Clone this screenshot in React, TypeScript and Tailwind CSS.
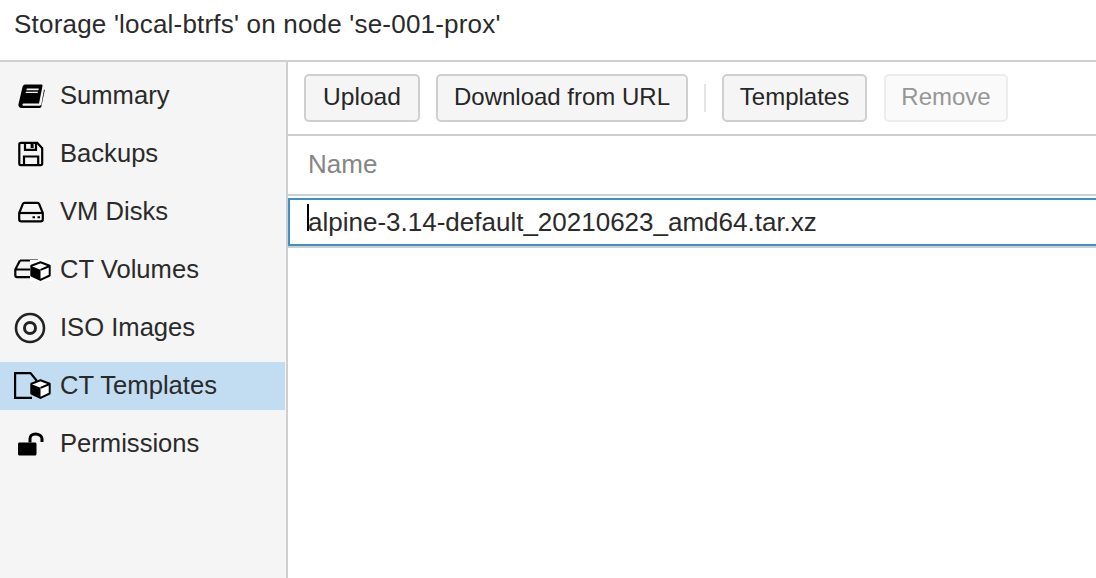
const font = { fontFamily: '"Liberation Sans", Arial, sans-serif' };

const BookIcon = () => (
  <svg width="28" height="26" viewBox="0 0 28 26">
    <path d="M8 1.500h16.500c.8 0 1.200.6 1 1.400L22 20.500H6.500c-1.300 0-1.500 2.300-.2 2.300h16.600c.8 0 1.200-.4 1.500-1.200L27 6.500l.8.6-3.400 16.200c-.2 1-.9 1.700-2 1.700H4.500C2.300 25 .9 23.200 1.500 21L5.500 4c.4-1.500 1.300-2.500 2.500-2.500z" fill="#000" />
    <path d="M9.800 5.500h12l-.4 1.700h-12zM9 8.800h12l-.4 1.200h-12z" fill="#f5f5f5" />
  </svg>
);

const SaveIcon = () => (
  <svg width="26" height="26" viewBox="0 0 26 26" fill="none" stroke="#000" strokeWidth="2.200">
    <path d="M2.800 1.800h16.400l5 5.500v15.200c0 .9-.7 1.600-1.600 1.600H2.800c-.9 0-1.500-.7-1.500-1.600V3.300c0-.9.600-1.500 1.500-1.500z" />
    <path d="M7 2v6.800h11V2" />
    <path d="M6 24v-8.500h14.200V24" />
    <rect x="12.600" y="2.500" width="3" height="4.500" fill="#000" stroke="none" />
  </svg>
);

const DiskIcon = () => (
  <svg width="26" height="22" viewBox="0 0 26 22" fill="none" stroke="#000" strokeWidth="2.200">
    <path d="M6.500 1.800h13c.8 0 1.300.4 1.600 1.100l3.700 9.100v6.200c0 1.300-.8 2.100-2.100 2.100H3.300c-1.300 0-2.100-.8-2.100-2.100V12l3.700-9.100c.3-.7.800-1.100 1.600-1.100z" />
    <path d="M1.500 12h23" />
    <path d="M14.500 16.200h2.500M19.500 16.200h2.500" strokeWidth="2" />
  </svg>
);

const Cube = () => (
  <svg width="21" height="20" viewBox="0 0 21 20" className="block">
    <path d="M10.500 1.200 19.700 4.700v9.800l-9.200 4.400-9.200-4.400V4.700z" fill="#fff" stroke="#000" strokeWidth="2" strokeLinejoin="round" />
    <path d="M1 5 10.500 8.800V19.400L1 14.800z" fill="#000" />
    <path d="M10.500 8.800 19.700 5" stroke="#000" strokeWidth="2" />
  </svg>
);

const VolumeIcon = () => (
  <div className="relative h-[22px] w-[36px]">
    <svg width="26" height="20" viewBox="0 0 26 20" fill="none" stroke="#000" strokeWidth="2.200" className="absolute left-0 top-0">
      <path d="M6 1.500h18M6 1.500 1.300 10.500v5.800c0 1.200.7 1.900 1.800 1.900H17M1.500 10.500H18" />
    </svg>
    <div className="absolute left-[16px] top-[1px] h-[21px] bg-white pt-px">
      <Cube />
    </div>
  </div>
);

const IsoIcon = () => (
  <svg width="32" height="32" viewBox="0 0 32 32" fill="none" stroke="#222" className="blur-[0.7px]">
    <circle cx="16" cy="16" r="14" strokeWidth="2.600" />
    <circle cx="16" cy="16" r="5.500" strokeWidth="3" />
  </svg>
);

const TemplateIcon = () => (
  <div className="relative h-[28px] w-[36px]">
    <svg width="26" height="28" viewBox="0 0 26 28" fill="none" stroke="#000" strokeWidth="2.200" className="absolute left-0 top-0">
      <path d="M23 9 16.500 1.100H1.100v24.800H18" />
    </svg>
    <div className="absolute left-[16px] top-[7px]">
      <Cube />
    </div>
  </div>
);

const UnlockIcon = () => (
  <svg width="28" height="24" viewBox="0 0 28 24">
    <path d="M2.500 10.500h15.500c.9 0 1.500.6 1.500 1.500v10c0 .9-.6 1.500-1.500 1.500H2.500c-.9 0-1.500-.6-1.500-1.500V12c0-.9.600-1.500 1.500-1.500z" fill="#000" />
    <path d="M13 10.500V6.800C13 3.800 15.400 2 18.500 2S25 3.800 25 6.800V10" fill="none" stroke="#000" strokeWidth="3" />
  </svg>
);

const menu = [
  { label: "Summary", icon: <BookIcon />, pad: "pl-[3px]" },
  { label: "Backups", icon: <SaveIcon />, pad: "pl-[4px]" },
  { label: "VM Disks", icon: <DiskIcon />, pad: "pl-[4px]" },
  { label: "CT Volumes", icon: <VolumeIcon />, pad: "pl-0" },
  { label: "ISO Images", icon: <IsoIcon />, pad: "pl-0" },
  { label: "CT Templates", icon: <TemplateIcon />, pad: "pl-0", active: true },
  { label: "Permissions", icon: <UnlockIcon />, pad: "pl-[3px]" },
];

const ToolButton = ({ label, disabled, className }: { label: string; disabled?: boolean; className: string }) => (
  <button
    className={`h-[48px] rounded-[5px] border-2 pb-[2px] leading-none ${className} ${
      disabled ? "border-[#ececec] bg-[#fafafa] text-[#969696]" : "border-[#cfcfcf] bg-[#f5f5f5] text-[#262626]"
    }`}
  >
    {label}
  </button>
);

const App = () => {
  return (
    <div className="flex h-[578px] w-[1096px] flex-col overflow-hidden bg-white text-[#2a2a2a]" style={font}>
      {/* Title */}
      <div className="flex h-[62px] items-center border-b-2 border-[#cfcfcf] pb-[12px] pl-[14px] text-[26px] tracking-[0.2px]">
        Storage 'local-btrfs' on node 'se-001-prox'
      </div>

      <div className="flex flex-1">
        {/* Side menu */}
        <div className="w-[288px] shrink-0 border-r-2 border-[#cfcfcf] bg-[#f5f5f5] pr-[1px] pt-[10px]">
          {menu.map((item) => (
            <div
              key={item.label}
              className={`mb-[10px] flex h-[48px] items-center pl-[14px] text-[25.6px] ${item.active ? "bg-[#c2ddf2]" : ""}`}
            >
              <div className={`flex w-[46px] shrink-0 items-center ${item.pad}`}>{item.icon}</div>
              <span className="pb-[2px]">{item.label}</span>
            </div>
          ))}
        </div>

        <div className="flex flex-1 flex-col">
          {/* Toolbar */}
          <div className="flex h-[74px] items-center gap-[16px] border-b-2 border-[#cfcfcf] pl-[16px]">
            <ToolButton label="Upload" className="w-[116px] text-[24.6px]" />
            <ToolButton label="Download from URL" className="w-[252px] text-[24px]" />
            <div className="h-[28px] w-[2px] bg-[#e4e4e4]" />
            <ToolButton label="Templates" className="w-[145px] text-[24px]" />
            <ToolButton label="Remove" disabled className="ml-px w-[124px] text-[24px]" />
          </div>

          {/* Column header */}
          <div className="flex h-[60px] items-center border-b-2 border-[#cfcfcf] pb-[2px] pl-[20px] text-[26px] text-[#858585]">
            Name
          </div>

          {/* Row */}
          <div className="mt-[2px] flex h-[48px] items-center border-2 border-r-0 border-[#3f8fcb] pl-[18px] pt-[1px] text-[26px] shadow-[0_2px_0_#cfcfcf]">
            <span className="relative">
              <span className="absolute -left-[1px] top-[1px] h-[27px] w-[2px] bg-black" />
              alpine-3.14-default_20210623_amd64.tar.xz
            </span>
          </div>
        </div>
      </div>
    </div>
  );
};

export default App;
